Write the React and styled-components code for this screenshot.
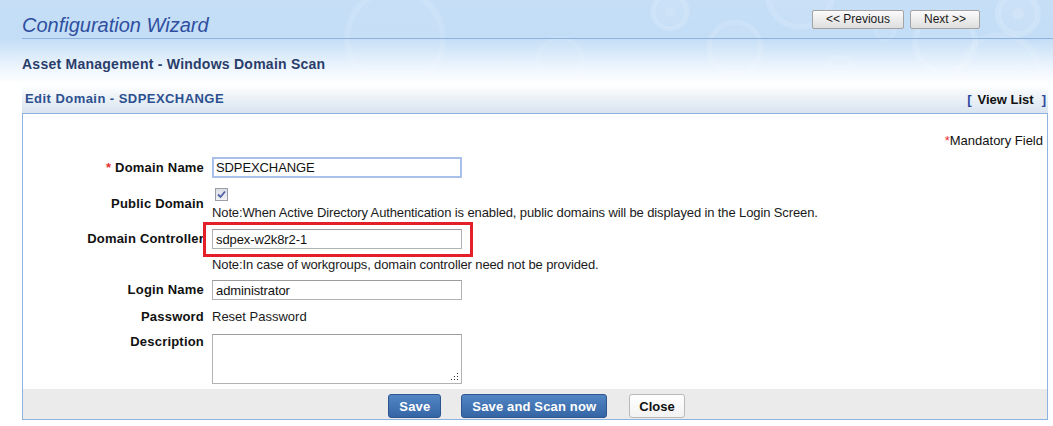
import React from 'react';
import styled, { createGlobalStyle } from 'styled-components';

const GlobalStyle = createGlobalStyle`
  html, body { margin: 0; padding: 0; background: #ffffff; }
  body { font-family: "Liberation Sans", Arial, sans-serif; font-size: 13px; color: #111; }
  * { box-sizing: border-box; }
`;

const Page = styled.div`
  position: relative;
  width: 1053px;
  height: 426px;
  overflow: hidden;
  background: linear-gradient(to bottom, #c6dff7 0px, #c3ddf6 38px, #d4e7f9 50px, #ebf4fd 66px, #ffffff 84px);
`;

const Bubbles = styled.svg`
  position: absolute;
  top: 0;
  left: 0;
  pointer-events: none;
`;

const Content = styled.div`
  position: relative;
`;

const TopBar = styled.header`
  display: flex;
  justify-content: space-between;
  align-items: flex-start;
  height: 39px;
  margin-left: 22px;
  padding-right: 73px;
  border-bottom: 1px solid #8fb3e0;
`;

const Title = styled.h1`
  margin: 0;
  align-self: flex-end;
  padding-bottom: 3px;
  font-size: 20px;
  line-height: 20px;
  font-style: italic;
  font-weight: normal;
  color: #2f4f9f;
`;

const NavGroup = styled.div`
  display: flex;
  gap: 6px;
  margin-top: 10px;
`;

const NavButton = styled.button`
  height: 19px;
  padding: 0 13px;
  font-family: "Liberation Sans", Arial, sans-serif;
  font-size: 12px;
  line-height: 17px;
  color: #1b1b1b;
  background: linear-gradient(to bottom, #fbfbfb, #dedede);
  border: 1px solid #a3a3a3;
  border-radius: 2px;
`;

const Subtitle = styled.h2`
  margin: 17px 0 0 22px;
  font-size: 14px;
  line-height: 16px;
  font-weight: bold;
  letter-spacing: 0.25px;
  color: #2a3d6a;
`;

const Panel = styled.section`
  margin: 13px 5px 0 22px;
`;

const PanelHeader = styled.div`
  display: flex;
  justify-content: space-between;
  align-items: center;
  height: 28px;
  padding: 0 2px 0 3px;
  background: linear-gradient(to bottom, rgba(255,255,255,0) 0%, #eef3f8 40%, #d9e4f0 100%);
`;

const PanelTitle = styled.span`
  font-size: 13px;
  line-height: 16px;
  font-weight: bold;
  letter-spacing: 0.45px;
  color: #2c5090;
`;

const ViewList = styled.span`
  font-size: 13px;
  font-weight: bold;
  color: #111;
  display: flex;
  gap: 6px;
`;

const Bracket = styled.span`
  color: #2c4a9c;
  margin-left: ${p => p.$gap || 0}px;
`;

const PanelBody = styled.div`
  border: 1px solid #8fb3e0;
  padding-top: 19px;
`;

const Mandatory = styled.div`
  text-align: right;
  padding-right: 4px;
  line-height: 16px;
  font-size: 13px;
`;

const Star = styled.span`
  color: #e8312f;
`;

const Form = styled.div`
  margin-top: 4px;
`;

const Row = styled.div`
  display: grid;
  grid-template-columns: 181px 1fr;
  column-gap: 8px;
  align-items: center;
  padding: 4px 0;
`;

const Label = styled.label`
  text-align: right;
  font-weight: bold;
  font-size: 13px;
  line-height: 16px;
  letter-spacing: 0.2px;
  white-space: nowrap;
  align-self: ${p => (p.$top ? 'start' : 'center')};
`;

const Field = styled.div`
  position: relative;
  display: flex;
  flex-direction: column;
  align-items: flex-start;
`;

const Input = styled.input`
  width: 250px;
  height: ${p => (p.$focus ? 21 : 20)}px;
  padding: 0 3px;
  font-family: "Liberation Sans", Arial, sans-serif;
  font-size: 13px;
  letter-spacing: -0.1px;
  color: #111;
  background: #fff;
  border: ${p => (p.$focus ? '2px solid #a9c0ea' : '1px solid #b2b2b2')};
  border-top-color: ${p => (p.$focus ? '#a9c0ea' : '#9c9c9c')};
  padding-left: ${p => (p.$focus ? 2 : 3)}px;
  outline: none;
`;

const Highlight = styled.div`
  position: absolute;
  top: -7px;
  left: -9px;
  width: 270px;
  height: 35px;
  border: 3px solid #e3202a;
  pointer-events: none;
`;

const CheckBox = styled.span`
  display: inline-flex;
  align-items: center;
  justify-content: center;
  width: 13px;
  height: 13px;
  margin: 2px 0 0 3px;
  border: 1px solid #9a9ea8;
  background: linear-gradient(to bottom, #dcdee3, #f2f3f5);
`;

const Note = styled.div`
  font-size: 13px;
  line-height: ${p => p.$lh || 16}px;
  letter-spacing: -0.12px;
  color: #1a1a1a;
  margin-top: ${p => p.$mt || 0}px;
  white-space: nowrap;
`;

const PlainValue = styled.div`
  font-size: 13px;
  line-height: 18px;
  color: #1a1a1a;
`;

const TextAreaWrap = styled.div`
  position: relative;
  width: 250px;
  height: 50px;
`;

const TextArea = styled.textarea`
  display: block;
  width: 250px;
  height: 50px;
  resize: none;
  border: 1px solid #b2b2b2;
  border-top-color: #9c9c9c;
  font-family: "Liberation Sans", Arial, sans-serif;
  font-size: 13px;
  outline: none;
`;

const Grip = styled.svg`
  position: absolute;
  right: 3px;
  bottom: 3px;
`;

const Footer = styled.div`
  display: flex;
  justify-content: center;
  align-items: flex-start;
  gap: 20px;
  height: 30px;
  margin-top: 1px;
  padding: 5px 0 0 3px;
  background: #ebebeb;
`;

const ActionButton = styled.button`
  height: 24px;
  padding: 0 ${p => (p.$primary ? 10 : 9)}px;
  margin-left: ${p => (p.$primary ? 0 : 2)}px;
  font-family: "Liberation Sans", Arial, sans-serif;
  font-size: 13px;
  font-weight: bold;
  letter-spacing: ${p => (p.$primary ? 0.15 : 0)}px;
  border-radius: 3px;
  color: ${p => (p.$primary ? '#ffffff' : '#111111')};
  background: ${p => (p.$primary
    ? 'linear-gradient(to bottom, #5286c4, #3565a5)'
    : 'linear-gradient(to bottom, #ffffff, #f2f2f2)')};
  border: 1px solid ${p => (p.$primary ? '#2d5690' : '#b9b9b9')};
`;

export default function App() {
  return (
    <>
      <GlobalStyle />
      <Page>
        <Bubbles width="1053" height="90" viewBox="0 0 1053 90">
          <g fill="#ffffff" stroke="#ffffff">
            <circle cx="395" cy="38" r="48" fillOpacity="0.05" strokeOpacity="0.1" strokeWidth="6" />
            <circle cx="670" cy="12" r="17" fillOpacity="0.07" strokeOpacity="0.14" strokeWidth="5" />
            <circle cx="670" cy="12" r="5" fillOpacity="0.12" strokeOpacity="0" />
            <circle cx="735" cy="48" r="26" fillOpacity="0.05" strokeOpacity="0.12" strokeWidth="5" />
            <circle cx="800" cy="-5" r="32" fillOpacity="0.06" strokeOpacity="0.12" strokeWidth="6" />
            <circle cx="885" cy="30" r="10" fillOpacity="0.07" strokeOpacity="0.1" strokeWidth="3" />
            <circle cx="945" cy="42" r="30" fillOpacity="0.06" strokeOpacity="0.13" strokeWidth="6" />
            <circle cx="1018" cy="14" r="20" fillOpacity="0.07" strokeOpacity="0.15" strokeWidth="6" />
            <circle cx="1018" cy="14" r="6" fillOpacity="0.15" strokeOpacity="0" />
            <circle cx="1000" cy="75" r="40" fillOpacity="0.05" strokeOpacity="0.11" strokeWidth="6" />
            <circle cx="560" cy="60" r="22" fillOpacity="0.04" strokeOpacity="0.09" strokeWidth="4" />
            <circle cx="840" cy="70" r="14" fillOpacity="0.05" strokeOpacity="0.09" strokeWidth="4" />
          </g>
        </Bubbles>
        <Content>
          <TopBar>
            <Title>Configuration Wizard</Title>
            <NavGroup>
              <NavButton>&lt;&lt; Previous</NavButton>
              <NavButton>Next &gt;&gt;</NavButton>
            </NavGroup>
          </TopBar>
          <Subtitle>Asset Management - Windows Domain Scan</Subtitle>
          <Panel>
            <PanelHeader>
              <PanelTitle>Edit Domain - SDPEXCHANGE</PanelTitle>
              <ViewList>
                <Bracket>[</Bracket>
                <span>View List</span>
                <Bracket $gap={2}>]</Bracket>
              </ViewList>
            </PanelHeader>
            <PanelBody>
              <Mandatory><Star>*</Star>Mandatory Field</Mandatory>
              <Form>
                <Row>
                  <Label><Star>*</Star> Domain Name</Label>
                  <Field>
                    <Input $focus defaultValue="SDPEXCHANGE" />
                  </Field>
                </Row>
                <Row>
                  <Label>Public Domain</Label>
                  <Field>
                    <CheckBox>
                      <svg width="9" height="9" viewBox="0 0 9 9">
                        <path d="M1 4.5 L3.5 7 L8 1.5" fill="none" stroke="#4f5fa8" strokeWidth="1.8" />
                      </svg>
                    </CheckBox>
                    <Note $mt={4}>Note:When Active Directory Authentication is enabled, public domains will be displayed in the Login Screen.</Note>
                  </Field>
                </Row>
                <Row>
                  <Label>Domain Controller</Label>
                  <Field>
                    <Input defaultValue="sdpex-w2k8r2-1" />
                    <Highlight />
                  </Field>
                </Row>
                <Row>
                  <Label />
                  <Note $lh={15}>Note:In case of workgroups, domain controller need not be provided.</Note>
                </Row>
                <Row>
                  <Label>Login Name</Label>
                  <Field>
                    <Input defaultValue="administrator" />
                  </Field>
                </Row>
                <Row>
                  <Label>Password</Label>
                  <PlainValue>Reset Password</PlainValue>
                </Row>
                <Row>
                  <Label $top>Description</Label>
                  <TextAreaWrap>
                    <TextArea />
                    <Grip width="9" height="9" viewBox="0 0 9 9">
                      <g fill="#333">
                        <rect x="7" y="1" width="1" height="1" />
                        <rect x="4" y="4" width="1" height="1" />
                        <rect x="7" y="4" width="1" height="1" />
                        <rect x="1" y="7" width="1" height="1" />
                        <rect x="4" y="7" width="1" height="1" />
                        <rect x="7" y="7" width="1" height="1" />
                      </g>
                    </Grip>
                  </TextAreaWrap>
                </Row>
              </Form>
              <Footer>
                <ActionButton $primary>Save</ActionButton>
                <ActionButton $primary>Save and Scan now</ActionButton>
                <ActionButton>Close</ActionButton>
              </Footer>
            </PanelBody>
          </Panel>
        </Content>
      </Page>
    </>
  );
}
